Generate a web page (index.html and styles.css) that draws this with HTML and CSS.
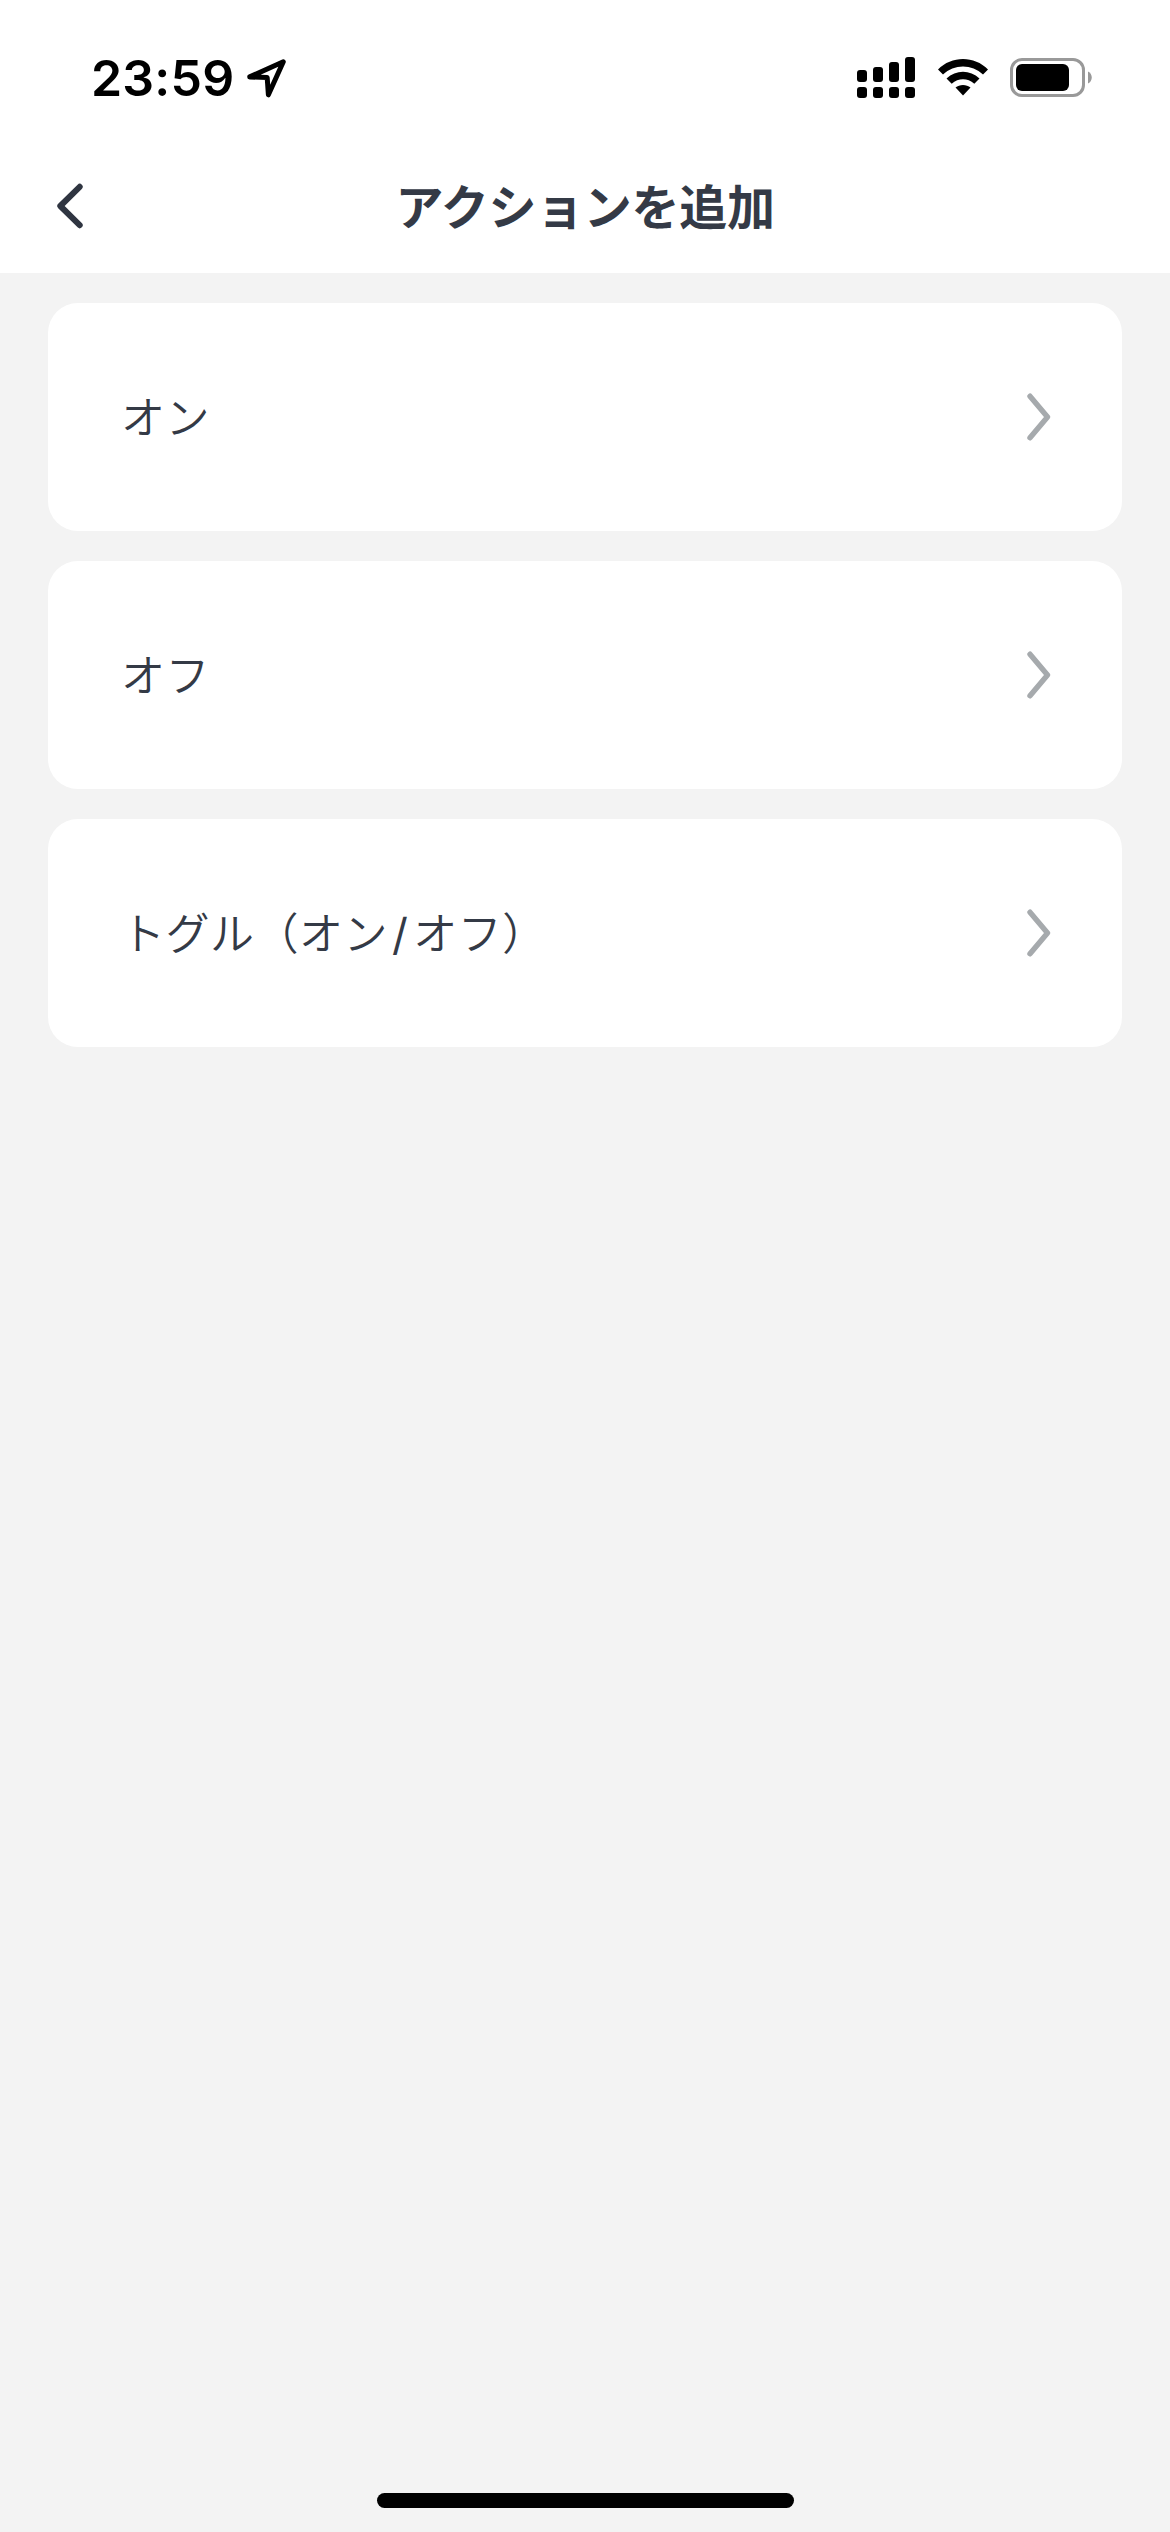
FILE: index.html
```html
<!DOCTYPE html>
<html lang="ja">
    <head>
        <meta charset="UTF-8">
        <meta name="viewport" content="width=device-width, initial-scale=1.0">
        <link rel="stylesheet" href="styles.css">
        <title>アクションを追加</title>
    </head>
    <body>

        <div id="statusbar">
            <span class="time">23:59</span>
            <svg class="location" width="44" height="44" viewBox="0 0 44 44">
                <path d="M5.7 20.9 L39.3 5.8 L24.4 38.8 L23.2 21.6 Z"/>
            </svg>
            <svg class="signal" width="58" height="42" viewBox="0 0 58 42">
                <rect x="0" y="13" width="10" height="12" rx="3"/>
                <rect x="16" y="10" width="10" height="15" rx="3"/>
                <rect x="32" y="5" width="10" height="20" rx="3"/>
                <rect x="48" y="0" width="10" height="25" rx="3"/>
                <rect x="0" y="30" width="10" height="11" rx="3"/>
                <rect x="16" y="30" width="10" height="11" rx="3"/>
                <rect x="32" y="30" width="10" height="11" rx="3"/>
                <rect x="48" y="30" width="10" height="11" rx="3"/>
            </svg>
            <svg class="wifi" width="50" height="38" viewBox="0 0 50 38">
                <path d="M0 10.5 C13.5 -3.5 36.5 -3.5 50 10.5 L45 15.5 C34 4.8 16 4.8 5 15.5 Z"/>
                <path d="M8.5 19.5 C18 10.5 32 10.5 41.5 19.5 L36.3 24.7 C29.5 18.8 20.5 18.8 13.7 24.7 Z"/>
                <path d="M17.5 28.5 C21.5 25 28.5 25 32.5 28.5 L25 36.5 Z"/>
            </svg>
            <svg class="battery" width="82" height="40" viewBox="0 0 82 40">
                <rect class="shell" x="1.5" y="1.5" width="72" height="36" rx="10.5"/>
                <rect x="6" y="6" width="53" height="27" rx="6"/>
                <path class="cap" d="M78 13.5 C83 15.5 83 23.5 78 25.5 Z"/>
            </svg>
        </div>

        <div id="header">
            <svg class="back" width="28" height="46" viewBox="0 0 28 46">
                <path d="M23.7 3.8 L4.3 23 L23.7 42.2"/>
            </svg>
            <h1>アクションを追加</h1>
        </div>

        <div id="list">
            <div class="item">
                <span class="label">オン</span>
                <svg class="arrow" width="24" height="48" viewBox="0 0 24 48">
                    <path d="M3 3.2 L20.5 24 L3 44.8"/>
                </svg>
            </div>
            <div class="item">
                <span class="label">オフ</span>
                <svg class="arrow" width="24" height="48" viewBox="0 0 24 48">
                    <path d="M3 3.2 L20.5 24 L3 44.8"/>
                </svg>
            </div>
            <div class="item">
                <span class="label">トグル（オン<span class="slash">/</span>オフ）</span>
                <svg class="arrow" width="24" height="48" viewBox="0 0 24 48">
                    <path d="M3 3.2 L20.5 24 L3 44.8"/>
                </svg>
            </div>
        </div>

        <div id="homebar"></div>

    </body>
</html>
```
FILE: styles.css
```css
body {
    margin: 0;
    height: 2532px;
    display: flex;
    flex-direction: column;
    background: #f3f3f3;
    color: #343a46;
    font-family: "Noto Sans CJK JP", sans-serif;
    overflow: hidden;
}

#statusbar {
    display: flex;
    align-items: center;
    height: 156px;
    padding: 0 78px 0 91px;
    box-sizing: border-box;
    background: #fff;
    color: #000;
}

.time {
    width: 153px;
    font-family: Inter, sans-serif;
    font-size: 50px;
    font-weight: 580;
    line-height: 60px;
    letter-spacing: 0.2px;
    white-space: nowrap;
}

.location {
    fill: none;
    stroke: #000;
    stroke-width: 5;
    stroke-linejoin: round;
}

.signal {
    margin-left: auto;
}

.wifi {
    margin-left: 23px;
}

.battery {
    margin-left: 22px;
}

.shell {
    fill: none;
    stroke: #999;
    stroke-width: 3;
}

.cap {
    fill: #999;
}

#header {
    position: relative;
    display: flex;
    align-items: center;
    justify-content: center;
    height: 117px;
    padding-bottom: 21px;
    box-sizing: border-box;
    background: #fff;
}

.back {
    position: absolute;
    left: 56px;
    top: 27px;
    fill: none;
    stroke: #2f3541;
    stroke-width: 6;
    stroke-linecap: round;
    stroke-linejoin: round;
}

h1 {
    margin: 0;
    font-size: 48px;
    font-weight: 700;
    line-height: 72px;
    letter-spacing: -0.3px;
}

#list {
    display: flex;
    flex-direction: column;
    gap: 30px;
    padding: 30px 48px;
}

.item {
    display: flex;
    align-items: center;
    justify-content: space-between;
    height: 228px;
    padding: 0 71px 0 73px;
    box-sizing: border-box;
    border-radius: 30px;
    background: #fff;
}

.label {
    padding-bottom: 4px;
    font-size: 44px;
    font-weight: 350;
    line-height: 66px;
    letter-spacing: 0.5px;
}

.slash {
    margin: 0 5px 0 4px;
    font-family: Inter, sans-serif;
    font-weight: 400;
    line-height: 0;
}

.arrow {
    fill: none;
    stroke: #a6aaad;
    stroke-width: 5.4;
    stroke-linecap: round;
    stroke-linejoin: round;
}

#homebar {
    width: 417px;
    height: 15px;
    margin: auto auto 24px;
    border-radius: 8px;
    background: #000;
}
```
